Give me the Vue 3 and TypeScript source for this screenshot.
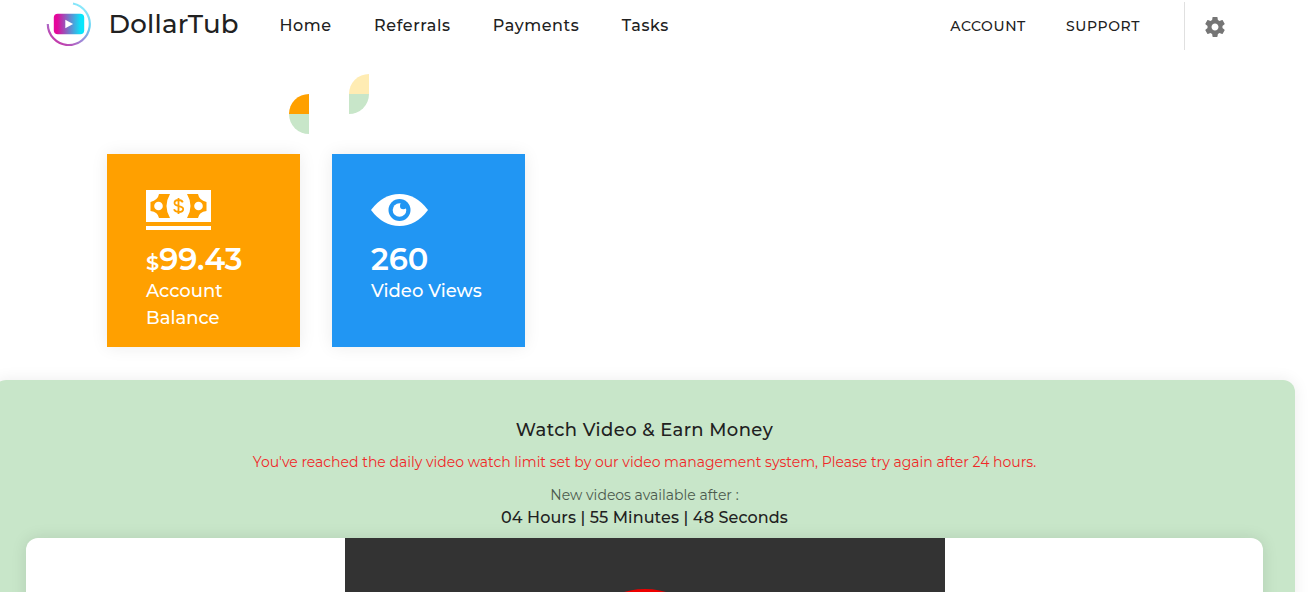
<script lang="ts" setup>
import { ref } from "vue";

interface NavItem {
    name: string;
    key: string;
}

const navList = ref<NavItem[]>([
    { name: "Home", key: "home" },
    { name: "Referrals", key: "referrals" },
    { name: "Payments", key: "payments" },
    { name: "Tasks", key: "tasks" },
]);

const balance = ref("99.43");
const views = ref(260);
const countdown = ref({ hours: "04", minutes: "55", seconds: "48" });
</script>

<template>
    <div class="page">
        <header class="header">
            <div class="brand">
                <svg class="logo" width="46" height="46" viewBox="0 0 46 46" fill="none">
                    <defs>
                        <linearGradient id="ring" x1="6" y1="40" x2="32" y2="3" gradientUnits="userSpaceOnUse">
                            <stop offset="0" stop-color="#c535a8" />
                            <stop offset="0.35" stop-color="#a085d6" />
                            <stop offset="0.7" stop-color="#62d0f3" />
                            <stop offset="1" stop-color="#8eeafb" />
                        </linearGradient>
                        <linearGradient id="screen" x1="8" y1="0" x2="38" y2="0" gradientUnits="userSpaceOnUse">
                            <stop offset="0.1" stop-color="#e5079b" />
                            <stop offset="0.5" stop-color="#717bc9" />
                            <stop offset="0.9" stop-color="#06e6fb" />
                        </linearGradient>
                    </defs>
                    <path d="M1.8 24A21 21 0 1 0 27 3.5" stroke="url(#ring)" stroke-width="2.2" />
                    <rect x="7.8" y="13.7" width="30.4" height="20.6" rx="4" fill="url(#screen)" />
                    <path d="M19.3 19.8v8.4l7.8-4.2z" fill="#fff" />
                </svg>
                <span class="brand-name">DollarTub</span>
            </div>
            <nav class="nav">
                <a v-for="item in navList" :key="item.key" :class="item.key">{{ item.name }}</a>
            </nav>
            <div class="actions">
                <a class="account">ACCOUNT</a>
                <a class="support">SUPPORT</a>
                <button class="setting">
                    <svg width="24" height="24" viewBox="0 0 24 24" fill="#757575">
                        <path
                            d="M19.43 12.98c.04-.32.07-.64.07-.98s-.03-.66-.07-.98l2.11-1.65c.19-.15.24-.42.12-.64l-2-3.46c-.12-.22-.39-.3-.61-.22l-2.49 1c-.52-.4-1.08-.73-1.69-.98l-.38-2.65C14.46 2.18 14.25 2 14 2h-4c-.25 0-.46.18-.49.42l-.38 2.65c-.61.25-1.17.59-1.69.98l-2.49-1c-.23-.09-.49 0-.61.22l-2 3.46c-.13.22-.07.49.12.64l2.11 1.65c-.04.32-.07.65-.07.98s.03.66.07.98l-2.11 1.65c-.19.15-.24.42-.12.64l2 3.46c.12.22.39.3.61.22l2.49-1c.52.4 1.08.73 1.69.98l.38 2.65c.03.24.24.42.49.42h4c.25 0 .46-.18.49-.42l.38-2.65c.61-.25 1.17-.59 1.69-.98l2.49 1c.23.09.49 0 .61-.22l2-3.46c.12-.22.07-.49-.12-.64l-2.11-1.65zM12 15.5c-1.93 0-3.5-1.57-3.5-3.5s1.57-3.5 3.5-3.5 3.5 1.57 3.5 3.5-1.57 3.5-3.5 3.5z"
                        />
                    </svg>
                </button>
            </div>
        </header>

        <section class="stats">
            <svg class="shapes" width="80" height="60" viewBox="0 0 80 60">
                <path d="M0 40A20 20 0 0 1 20 20V40z" fill="#ffa000" />
                <path d="M0 40H20V60A20 20 0 0 1 0 40z" fill="#c8e6c9" />
                <path d="M60 20A20 20 0 0 1 80 0V20z" fill="#ffecb3" />
                <path d="M60 20H80A20 20 0 0 1 60 40z" fill="#c8e6c9" />
            </svg>
            <div class="cards">
                <div class="card orange">
                    <svg class="icon" width="65" height="40" viewBox="0 0 65 40">
                        <path d="M0 0h65v32H0zM0 36h65v4H0z" fill="#fff" />
                        <path d="M13 4h11Q17 16 24 28H13Q12 22 4.5 21V12Q12 10 13 4z" fill="#ffa000" />
                        <path d="M52 4H41Q48 16 41 28H52Q53 22 60.5 21V12Q53 10 52 4z" fill="#ffa000" />
                        <circle cx="12.5" cy="16" r="4.3" fill="#fff" />
                        <circle cx="52.5" cy="16" r="4.3" fill="#fff" />
                        <path
                            d="M36.8 12.3C36 10.5 34.5 10 32.5 10c-2.5 0-4 1.1-4 2.9 0 4.3 8.7 2 8.7 6.1 0 1.9-1.8 3-4.5 3-2.4 0-4-.8-4.7-2.7M32.5 8v16"
                            fill="none"
                            stroke="#ffa000"
                            stroke-width="1.8"
                        />
                    </svg>
                    <div class="value"><small>$</small><span class="amount">{{ balance }}</span></div>
                    <div class="label">Account Balance</div>
                </div>
                <div class="card blue">
                    <svg class="icon" width="57" height="40" viewBox="0 0 57 40">
                        <path d="M0 20Q12 4 28.5 4T57 20Q45 36 28.5 36T0 20z" fill="#fff" />
                        <circle cx="28.5" cy="20" r="11" fill="#2196f3" />
                        <circle cx="28.5" cy="20" r="6.8" fill="#fff" />
                        <circle cx="32.3" cy="15.9" r="3.3" fill="#2196f3" />
                    </svg>
                    <div class="value"><span class="count">{{ views }}</span></div>
                    <div class="label">Video Views</div>
                </div>
            </div>
        </section>

        <section class="watch">
            <h2>Watch Video &amp; Earn Money</h2>
            <p class="limit">You've reached the daily video watch limit set by our video management system, Please try again after 24 hours.</p>
            <p class="next">New videos available after :</p>
            <p class="time">{{ countdown.hours }} Hours | {{ countdown.minutes }} Minutes | {{ countdown.seconds }} Seconds</p>
            <div class="player">
                <div class="video">
                    <span class="play"></span>
                </div>
            </div>
        </section>
    </div>
</template>

<style>
body {
    margin: 0;
    overflow: hidden;
}
</style>

<style scoped>
.page {
    height: 592px;
    overflow: hidden;
    background: #fff;
    color: #212121;
    font-family: Montserrat, Inter, "Open Sans", sans-serif;
    display: flex;
    flex-direction: column;
}
a,
.brand-name,
.value,
.label,
h2,
p {
    white-space: nowrap;
}
/* top bar */
.header {
    display: flex;
    align-items: center;
    flex: none;
    height: 50px;
    padding-left: 46px;
    box-sizing: border-box;
}
.brand {
    display: flex;
    align-items: center;
    gap: 16.5px;
    width: 233.5px;
    padding-bottom: 4px;
}
.logo {
    flex: none;
}
.brand-name {
    padding-top: 2px;
    font-size: 26px;
    font-weight: 500;
    letter-spacing: 0.25px;
}
.nav {
    display: flex;
    gap: 42.3px;
    font-size: 16px;
    font-weight: 500;
    letter-spacing: 0.6px;
}
.actions {
    display: flex;
    align-items: center;
    gap: 40px;
    margin-left: auto;
    padding-right: 87px;
    font-size: 14px;
    font-weight: 500;
    letter-spacing: 0.6px;
}
.actions a {
    padding-top: 2px;
}
.setting {
    display: flex;
    align-items: center;
    height: 48px;
    margin: 2px 0 0 4px;
    padding: 2px 0 0 18px;
    box-sizing: border-box;
    border: none;
    border-left: 1px solid #e0e0e0;
    background: none;
}
/* stat cards */
.stats {
    flex: none;
    height: 330px;
    padding: 24px 0 0 107px;
    box-sizing: border-box;
}
.shapes {
    display: block;
    margin-left: 182px;
}
.cards {
    display: flex;
    gap: 32px;
    margin-top: 20px;
}
.card {
    width: 193px;
    height: 193px;
    padding: 36px 39px 0;
    box-sizing: border-box;
    color: #fff;
    box-shadow: 0 0 16px rgba(0, 0, 0, 0.08);
}
.orange {
    background: #ffa000;
}
.blue {
    background: #2196f3;
}
.icon {
    display: block;
}
.value {
    height: 48px;
    line-height: 58px;
    font-size: 30.5px;
    font-weight: 600;
}
.value small {
    font-size: 21px;
}
.label {
    white-space: normal;
    font-size: 18px;
    font-weight: 500;
    line-height: 27px;
}
/* video panel */
.watch {
    flex: none;
    width: 1301px;
    height: 300px;
    margin-left: -6px;
    padding: 36px 32px 0;
    box-sizing: border-box;
    border-radius: 12px;
    background: #c8e6c9;
    box-shadow: 0 0 16px rgba(0, 0, 0, 0.08);
    text-align: center;
}
.watch h2 {
    margin: 0;
    font-size: 18px;
    font-weight: 500;
    line-height: 28px;
    letter-spacing: 0.4px;
}
.watch p {
    margin: 0;
}
.limit {
    padding-top: 6px;
    color: #f02828;
    font-size: 14px;
    font-weight: 400;
    line-height: 24px;
}
.watch .next {
    margin-top: 9px;
    color: #4c5a4d;
    font-size: 14px;
    font-weight: 400;
    line-height: 24px;
}
.time {
    font-size: 16px;
    font-weight: 500;
    line-height: 21px;
    letter-spacing: 0.1px;
}
.player {
    display: flex;
    justify-content: center;
    height: 300px;
    margin-top: 10px;
    border-radius: 12px;
    background: #fff;
    box-shadow: 0 0 16px rgba(0, 0, 0, 0.1);
}
.video {
    display: flex;
    justify-content: center;
    width: 600px;
    background: #333;
}
.play {
    width: 150px;
    height: 150px;
    margin-top: 51px;
    border-radius: 50%;
    background: #e00;
}
</style>
